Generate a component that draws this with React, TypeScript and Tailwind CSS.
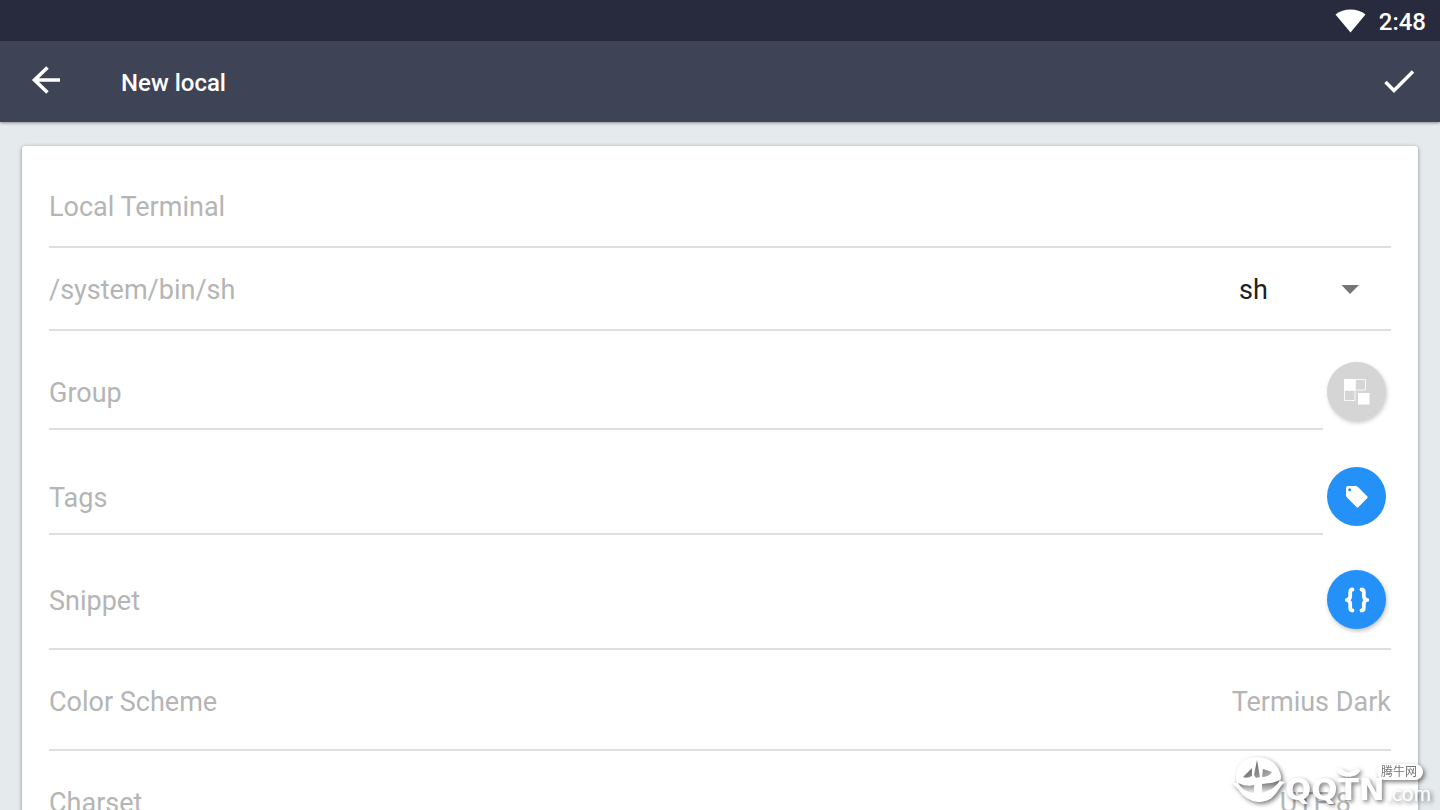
import { useState } from 'react';
import type { ReactNode } from 'react';

interface FieldProps {
  id: string;
  label: string;
  rowClass: string;
  action?: ReactNode;
  fullLine?: boolean;
}

const inputClass =
  'h-full w-full min-w-0 bg-transparent pt-[2px] text-[27px] text-[#212121] outline-none placeholder:text-[#b5b5b5] placeholder:opacity-100';

// Text field with an optional round button on the right
function Field({ id, label, rowClass, action, fullLine }: FieldProps) {
  const line = 'border-b-2 border-[#dedede]';
  return (
    <div className={`flex ${rowClass} ${fullLine ? line : ''}`}>
      <div className={`h-full flex-1 ${fullLine ? '' : line}`}>
        <input id={id} type="text" aria-label={label} placeholder={label} className={inputClass} />
      </div>
      {action}
    </div>
  );
}

function RoundButton({ label, className, children }: { label: string; className: string; children: ReactNode }) {
  return (
    <button
      type="button"
      aria-label={label}
      className={`mr-[5px] ml-1 flex size-[59px] shrink-0 items-center justify-center rounded-full ${className}`}
    >
      {children}
    </button>
  );
}

function SettingRow({ label, value, valueClass }: { label: string; value: string; valueClass?: string }) {
  return (
    <button
      type="button"
      className="flex h-[101px] w-full items-center justify-between border-b-2 border-[#dedede] pt-[6px] text-[27px] text-[#b5b5b5]"
    >
      <span>{label}</span>
      <span className={valueClass}>{value}</span>
    </button>
  );
}

function StatusBar() {
  return (
    <div className="flex h-[41px] shrink-0 items-center justify-end gap-3 bg-[#282b3e] pr-[14px] text-white">
      <svg width="32" height="24" viewBox="0 0 32 24" fill="currentColor" aria-hidden="true">
        <path d="M0.500 5.500C9-1.200 22-1.200 30.500 5.500L15.500 23.500Z" />
      </svg>
      <span className="pt-[2px] text-2xl font-medium">2:48</span>
    </div>
  );
}

function Toolbar() {
  return (
    <header className="z-10 flex h-[81px] shrink-0 items-center bg-[#3f4356] text-white shadow-[0_1px_3px_rgba(0,0,0,0.4)]">
      <button type="button" aria-label="Back" className="ml-[30px] pb-1">
        <svg width="32" height="32" viewBox="0 0 32 32" fill="none" stroke="currentColor" strokeWidth="3.600" aria-hidden="true">
          <path d="M30 16H5M17.500 3.500L4.500 16L17.500 28.500" />
        </svg>
      </button>
      <h1 className="ml-[59px] flex-1 pt-[2px] text-2xl font-medium">New local</h1>
      <button type="button" aria-label="Save" className="mr-[25px] pb-[2px]">
        <svg width="32" height="26" viewBox="0 0 32 26" fill="none" stroke="currentColor" strokeWidth="3.400" aria-hidden="true">
          <path d="M2.500 14L11 22.500L30 3.500" />
        </svg>
      </button>
    </header>
  );
}

function Watermark() {
  return (
    <svg
      className="pointer-events-none absolute right-0 bottom-0 [filter:drop-shadow(2px_2px_2px_rgba(0,0,0,0.5))]"
      width="214"
      height="60"
      viewBox="0 0 214 60"
      fill="#fff"
      aria-hidden="true"
    >
      <defs>
        <linearGradient id="blade" x1="0" y1="0" x2="1" y2="1">
          <stop offset="0" stopColor="#4a4a4a" />
          <stop offset="1" stopColor="#b8b8b8" />
        </linearGradient>
        <linearGradient id="jaw" x1="0" y1="0" x2="0" y2="1">
          <stop offset="0" stopColor="#5a5a5a" />
          <stop offset="1" stopColor="#f0f0f0" />
        </linearGradient>
      </defs>
      <path d="M10 26C11 13 19 7 31 7C44 7 53 15 55 26C55 28 55 29 54 31L59 32C55 35 54 38 51 42C46 50 39 52 32 52C24 51 17 47 13 40C10 37 8 35 5 32L11 33Q10 30 10 26Z" />
      <path fill="url(#blade)" d="M31 10L34 27L30 28L28 25ZM26 18L17 27Q21 29 26 26ZM37 19L46 22Q43 27 36 27Z" />
      <path fill="url(#jaw)" d="M12 33Q20 37 28 35V43Q17 42 12 33ZM36 34Q46 34 54 30Q50 39 36 43Z" />
      <text x="59" y="50" fontFamily="'DejaVu Sans', sans-serif" fontWeight="700" fontSize="31">QQTN</text>
      <path d="M111 20C112 29 133 29 134 20Q131 17 128 20Q124 24 119 21Q114 17 111 20Z" />
      <text x="161" y="51" fontFamily="Lato, sans-serif" fontSize="21">.com</text>
      <rect x="151" y="14" width="46" height="16" rx="8" />
      <text x="155" y="26" fill="#777" fontFamily="'Noto Sans CJK SC', sans-serif" fontSize="12">腾牛网</text>
    </svg>
  );
}

export default function App() {
  const [shell, setShell] = useState('sh');

  return (
    <div className="relative flex h-screen flex-col overflow-hidden bg-[#e5eaed] font-[Roboto,sans-serif]">
      <StatusBar />
      <Toolbar />
      <main className="flex-1 overflow-hidden px-[22px] pt-6">
        <form className="rounded-[3px] bg-white px-[27px] pt-5 shadow-[0_1px_4px_rgba(0,0,0,0.4)]">
          <Field id="alias" label="Local Terminal" rowClass="h-[82px]" fullLine />
          <Field
            id="path"
            label="/system/bin/sh"
            rowClass="h-[83px]"
            fullLine
            action={
              <div className="relative flex w-[152px] shrink-0 items-center pt-[2px]">
                <select
                  aria-label="Shell"
                  value={shell}
                  onChange={(e) => setShell(e.target.value)}
                  className="h-full w-full appearance-none bg-transparent pt-[2px] text-[27px] text-[#212121] outline-none"
                >
                  <option value="sh">sh</option>
                  <option value="bash">bash</option>
                </select>
                <svg className="pointer-events-none absolute right-8" width="18" height="9" viewBox="0 0 18 9" fill="#757575" aria-hidden="true">
                  <path d="M0.500 0H18L9 9Z" />
                </svg>
              </div>
            }
          />
          <Field
            id="group"
            label="Group"
            rowClass="h-[99px] items-end pt-6"
            action={
              <RoundButton label="Choose group" className="mb-[9px] bg-[#d5d5d5] shadow-[1px_2px_4px_rgba(0,0,0,0.2)]">
                <svg width="26" height="26" viewBox="0 0 26 26" fill="#fff" aria-hidden="true">
                  <path d="M0 0H11V11H0ZM14 14H25.500V25.500H14Z" />
                  <path d="M11.500 0.500H21.500V11H11.500ZM0.500 11.500H11V21.500H0.500Z" fill="none" stroke="#fff" strokeOpacity="0.850" />
                </svg>
              </RoundButton>
            }
          />
          <Field
            id="tags"
            label="Tags"
            rowClass="h-[105px] items-end pt-[30px]"
            action={
              <RoundButton label="Choose tags" className="mb-[9px] bg-[#2491f8]">
                <svg width="22" height="22" viewBox="0 0 22 22" fill="#fff" aria-hidden="true">
                  <path fillRule="evenodd" d="M2 0H10Q11 0 12 1L21.400 10.400Q22 11 21.400 12L12.500 21Q11.500 22 10.500 21L1 11.500Q0 10.500 0 9.500V2Q0 0 2 0ZM3.700 2.200A1.500 1.500 0 1 0 3.700 5.200A1.500 1.500 0 1 0 3.700 2.200Z" />
                </svg>
              </RoundButton>
            }
          />
          <Field
            id="snippet"
            label="Snippet"
            rowClass="h-[115px] pt-4"
            fullLine
            action={
              <RoundButton label="Choose snippet" className="self-center bg-[#2491f8] shadow-[1px_2px_4px_rgba(0,0,0,0.25)]">
                <svg width="24" height="26" viewBox="0 0 24 26" fill="none" stroke="#fff" strokeWidth="3.800" aria-hidden="true">
                  <path strokeLinecap="round" d="M7.500 2.500Q5.200 2.500 5.200 5.500V9Q5.200 12 2.200 13Q5.200 14 5.200 17V20.500Q5.200 23.500 7.500 23.500M16.500 2.500Q18.800 2.500 18.800 5.500V9Q18.800 12 21.800 13Q18.800 14 18.800 17V20.500Q18.800 23.500 16.500 23.500" />
                </svg>
              </RoundButton>
            }
          />
          <SettingRow label="Color Scheme" value="Termius Dark" />
          <SettingRow label="Charset" value="UTF-8" valueClass="mr-10" />
        </form>
      </main>
      <Watermark />
    </div>
  );
}
